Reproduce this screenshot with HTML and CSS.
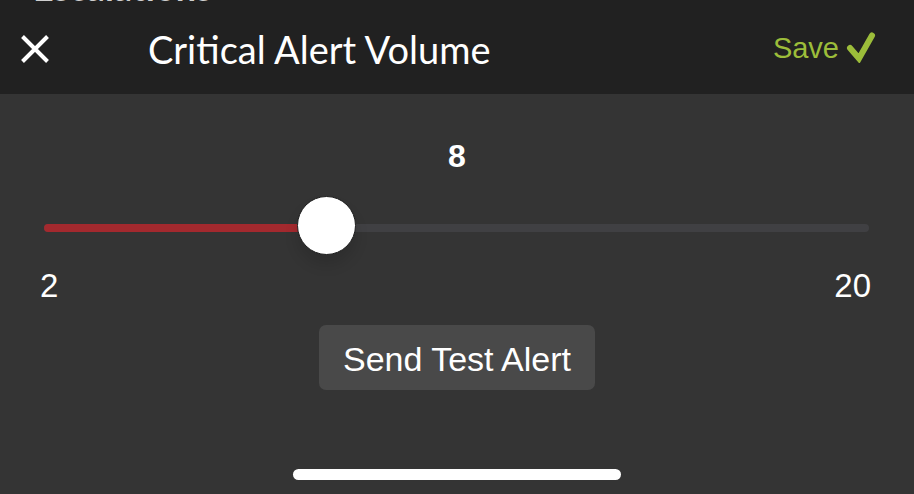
FILE: index.html
```html
<!DOCTYPE html>
<html>
<head>
<meta charset="utf-8">
<link rel="stylesheet" href="styles.css">
</head>
<body>
<div class="screen">
  <header class="header">
    <div class="peek"><span>Escalations</span></div>
    <div class="bar">
      <svg class="close" width="30" height="30" viewBox="0 0 30 30"><path d="M2.5 2.5 L27.5 27.5 M27.5 2.5 L2.5 27.5" stroke="#fff" stroke-width="4" fill="none"/></svg>
      <div class="title">Critical Alert Volume</div>
      <div class="save">
        <span>Save</span>
        <svg class="check" width="32" height="32" viewBox="0 0 32 32"><path d="M5 17 L14 27.5 L27 4.5" stroke="#9cbd3a" stroke-width="6" fill="none" stroke-linejoin="miter" stroke-linecap="round"/></svg>
      </div>
    </div>
  </header>
  <main class="content">
    <div class="value">8</div>
    <div class="slider">
      <div class="track"><div class="fill" style="width:34.3%"></div></div>
      <div class="thumb" style="left:calc(34.3% - 29.5px)"></div>
    </div>
    <div class="labels"><span>2</span><span>20</span></div>
    <button class="test">Send Test Alert</button>
    <div class="home"></div>
  </main>
</div>
</body>
</html>
```
FILE: styles.css
```css
html, body { margin: 0; padding: 0; }
body { background: #343434; font-family: "Liberation Sans", Arial, sans-serif; color: #fff; }
.screen { width: 914px; height: 494px; overflow: hidden; display: flex; flex-direction: column; }
.header { background: #212121; height: 94px; display: flex; flex-direction: column; }
.peek { height: 4px; overflow: hidden; padding-left: 33px; }
.peek span { display: block; font-family: Lato, sans-serif; font-weight: bold; font-size: 36px; line-height: 40px; margin-top: -33px; color: #cfcfcf; }
.bar { height: 90px; display: flex; align-items: center; padding: 0 37px 0 20px; }
.close { flex: none; }
.title { margin-left: 98px; font-family: Lato, sans-serif; font-size: 38px; color: #fff; flex: 1; }
.save { display: flex; align-items: center; gap: 6px; color: #9cbd3a; font-size: 29px; margin-top: -2px; }
.check { margin-top: -2px; }
.content { flex: 1; display: flex; flex-direction: column; align-items: center; }
.value { font-weight: bold; font-size: 32px; line-height: 38px; margin-top: 43px; }
.slider { align-self: stretch; position: relative; height: 59px; margin: 21px 45px 0 44px; display: flex; align-items: center; }
.track { flex: 1; height: 8px; border-radius: 4px; background: #404043; display: flex; margin-top: 5px; }
.fill { height: 8px; border-radius: 4px; background: #a3292e; }
.thumb { position: absolute; top: 0; width: 57px; height: 57px; border-radius: 50%; background: #fff; border: 1px solid #1e1e1e; box-shadow: 0 10px 14px rgba(0,0,0,0.12); }
.labels { align-self: stretch; display: flex; justify-content: space-between; margin: 13px 43px 0 40px; font-size: 33px; line-height: 36px; }
.test { margin-top: 21px; width: 276px; height: 65px; border: none; border-radius: 7px; background: #494949; color: #fff; font-family: "Liberation Sans", Arial, sans-serif; font-size: 34px; padding: 3px 0 0; }
.home { margin-top: 79px; width: 328px; height: 11px; border-radius: 6px; background: #fff; }
```
